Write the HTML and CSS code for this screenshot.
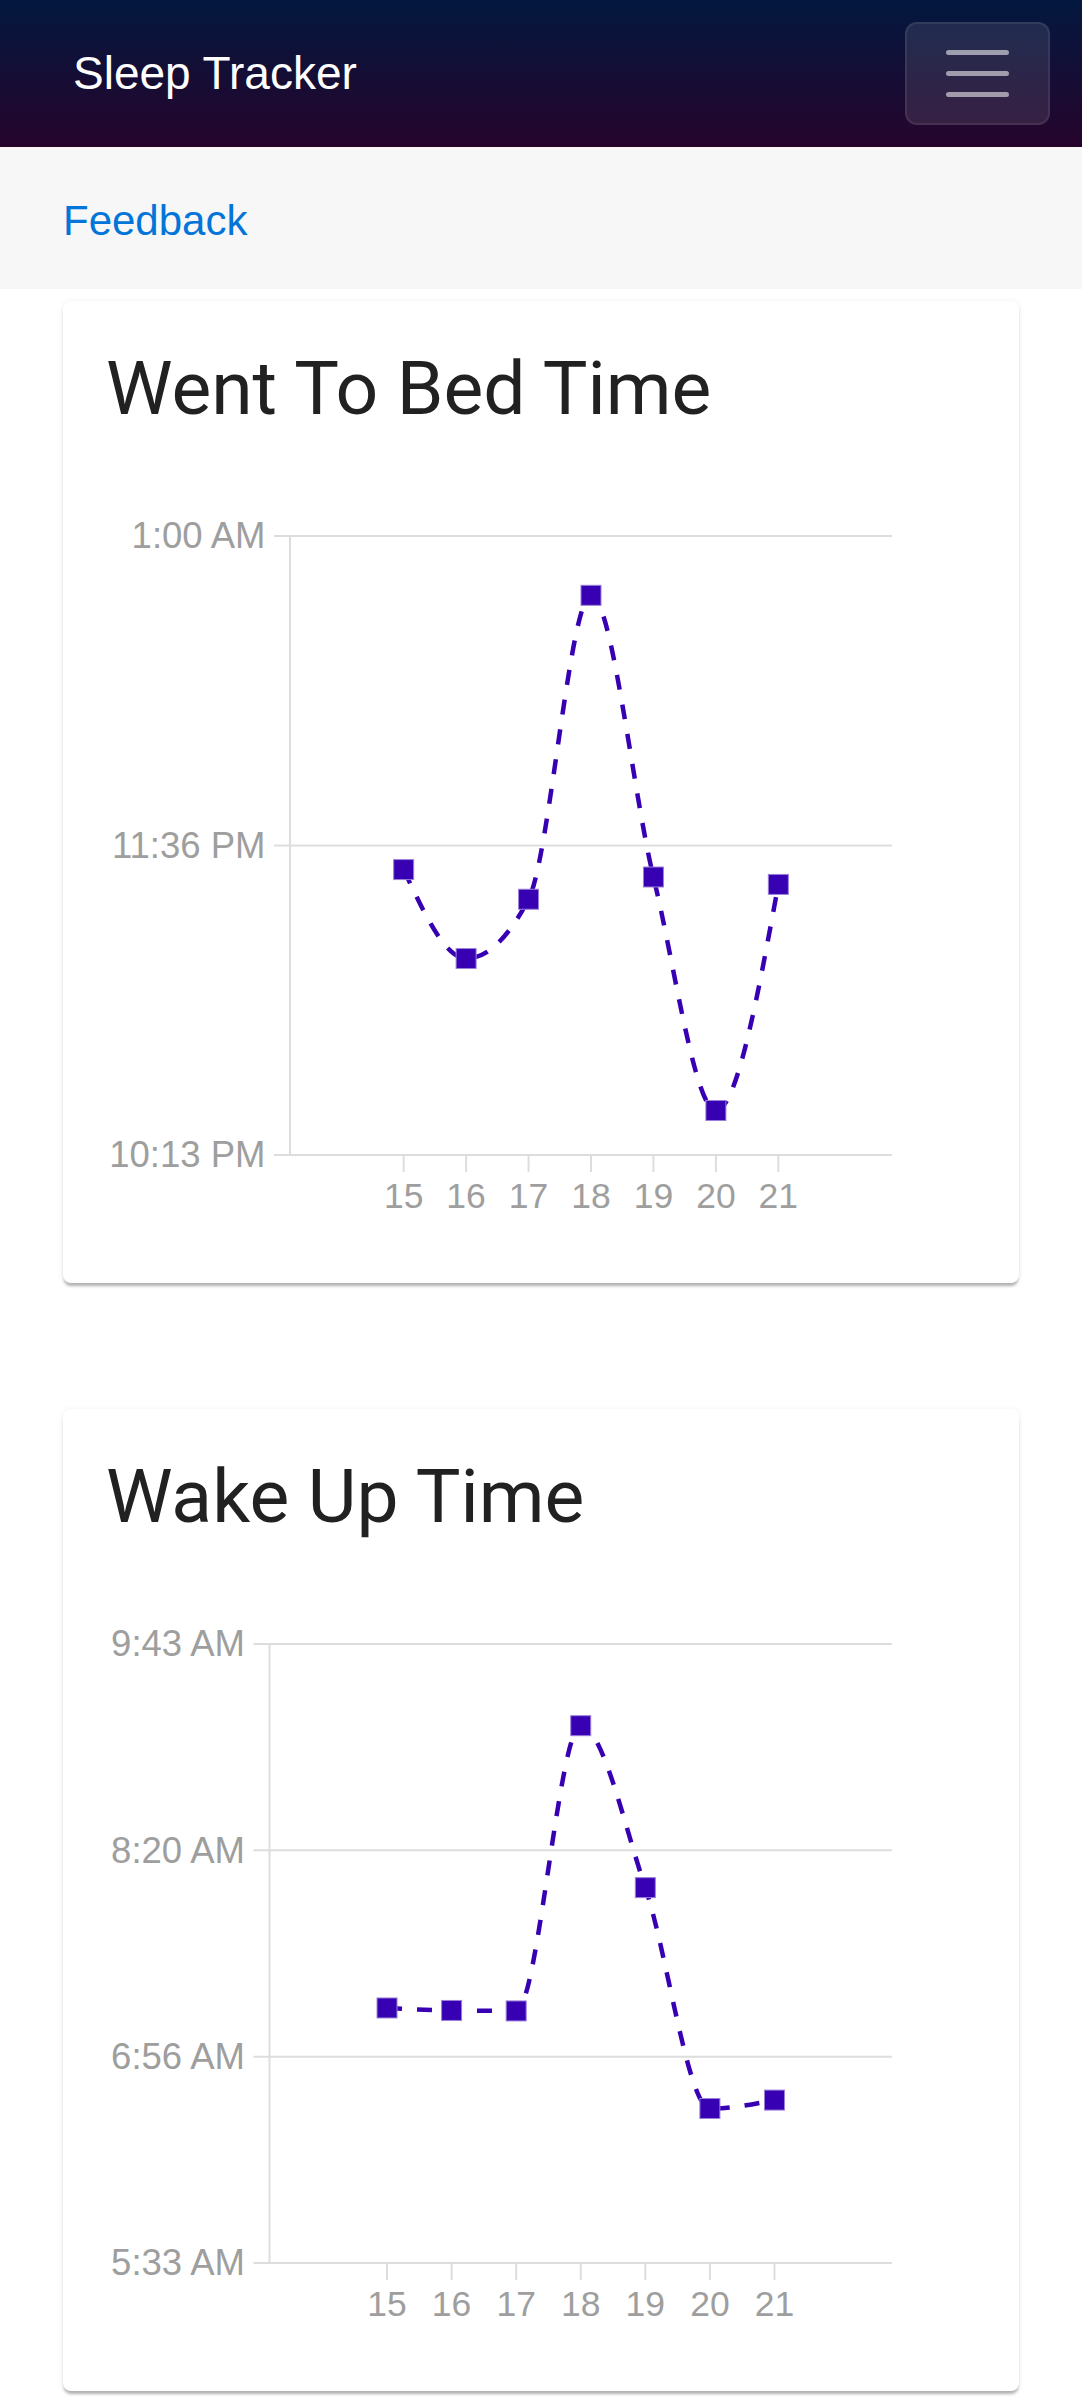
FILE: index.html
```html
<!DOCTYPE html>
<html lang="en">
<head>
  <meta charset="UTF-8" />
  <title>Sleep Tracker</title>
  <link rel="stylesheet" href="styles.css">
</head>
<body>
  <nav class="navbar">
    <span class="brand">Sleep Tracker</span>
    <button class="toggler" aria-label="Toggle navigation">
      <svg width="63" height="47" viewBox="0 0 63 47">
        <path d="M2.5 2.5H60.5M2.5 23.5H60.5M2.5 44.5H60.5" stroke="rgba(255,255,255,0.55)" stroke-width="5" stroke-linecap="round" fill="none" />
      </svg>
    </button>
  </nav>

  <div class="subnav">
    <a href="#" class="feedback">Feedback</a>
  </div>

  <main class="content">
    <section class="card">
      <h2 class="card-title">Went To Bed Time</h2>
      <svg class="chart" id="bedChart" width="956" height="800"></svg>
    </section>

    <section class="card">
      <h2 class="card-title">Wake Up Time</h2>
      <svg class="chart" id="wakeChart" width="956" height="800"></svg>
    </section>
  </main>

  <script>
    const NS = "http://www.w3.org/2000/svg";
    const days = [15, 16, 17, 18, 19, 20, 21];

    // plot box shared by both charts (svg px)
    const plotTop = 104;
    const plotBottom = 723;
    const plotRight = 829;

    // times are minutes from midnight (past midnight runs over 1440)
    const charts = [
      {
        id: "bedChart",
        left: 227,
        min: 1333,
        max: 1500,
        ticks: ["10:13 PM", "11:36 PM", "1:00 AM"],
        values: [1410, 1386, 1402, 1484, 1408, 1345, 1406]
      },
      {
        id: "wakeChart",
        left: 206.5,
        min: 333,
        max: 583,
        ticks: ["5:33 AM", "6:56 AM", "8:20 AM", "9:43 AM"],
        values: [436, 435, 434.8, 550, 484.6, 395.4, 398.8]
      }
    ];

    function el(name, attrs, parent) {
      const node = document.createElementNS(NS, name);
      for (const k in attrs) node.setAttribute(k, attrs[k]);
      parent.appendChild(node);
      return node;
    }

    // monotone cubic through the points, same idea as d3's curveMonotoneX
    function monotonePath(pts) {
      const n = pts.length;
      const m = new Array(n).fill(0);
      const sign = v => (v < 0 ? -1 : 1);
      for (let i = 1; i < n - 1; i++) {
        const [x0, y0] = pts[i - 1], [x1, y1] = pts[i], [x2, y2] = pts[i + 1];
        const h0 = x1 - x0, h1 = x2 - x1;
        const s0 = (y1 - y0) / h0, s1 = (y2 - y1) / h1;
        const p = (s0 * h1 + s1 * h0) / (h0 + h1);
        m[i] = (sign(s0) + sign(s1)) * Math.min(Math.abs(s0), Math.abs(s1), 0.5 * Math.abs(p)) || 0;
      }
      const h = pts[1][0] - pts[0][0];
      m[0] = (3 * (pts[1][1] - pts[0][1]) / h - m[1]) / 2;
      const hl = pts[n - 1][0] - pts[n - 2][0];
      m[n - 1] = (3 * (pts[n - 1][1] - pts[n - 2][1]) / hl - m[n - 2]) / 2;

      let d = `M${pts[0][0]},${pts[0][1]}`;
      for (let i = 1; i < n; i++) {
        const [x0, y0] = pts[i - 1], [x1, y1] = pts[i];
        const dx = (x1 - x0) / 3;
        d += `C${x0 + dx},${y0 + dx * m[i - 1]} ${x1 - dx},${y1 - dx * m[i]} ${x1},${y1}`;
      }
      return d;
    }

    charts.forEach(c => {
      const svg = document.getElementById(c.id);
      const width = plotRight - c.left;
      const step = width / (days.length - 1 + 3.64);
      const firstX = c.left + step * 1.82;
      const xOf = i => firstX + i * step;
      const yOf = v => plotBottom - (v - c.min) / (c.max - c.min) * (plotBottom - plotTop);

      // horizontal grid + y ticks
      c.ticks.forEach((label, i) => {
        const y = plotBottom - i * (plotBottom - plotTop) / (c.ticks.length - 1);
        el("line", { x1: c.left - 16, x2: plotRight, y1: y, y2: y, class: "grid" }, svg);
        const t = el("text", { x: c.left - 24.5, y: y, dy: "0.34em", "text-anchor": "end", class: "tick tick-y" }, svg);
        t.textContent = label;
      });

      el("line", { x1: c.left, x2: c.left, y1: plotTop - 1, y2: plotBottom, class: "grid" }, svg);

      // x ticks
      days.forEach((day, i) => {
        const x = xOf(i);
        el("line", { x1: x, x2: x, y1: plotBottom, y2: plotBottom + 17, class: "grid" }, svg);
        const t = el("text", { x: x, y: plotBottom + 53, "text-anchor": "middle", class: "tick" }, svg);
        t.textContent = day;
      });

      const pts = c.values.map((v, i) => [xOf(i), yOf(v)]);
      el("path", { d: monotonePath(pts), class: "line" }, svg);

      pts.forEach(([x, y]) => {
        el("rect", { x: x - 10, y: y - 10, width: 20, height: 20, class: "dot" }, svg);
      });
    });
  </script>
</body>
</html>
```

FILE: styles.css
```css
body {
  margin: 0;
  background: #fff;
  font-family: 'Liberation Sans', Arial, sans-serif;
}

.navbar {
  height: 147px;
  box-sizing: border-box;
  padding: 0 32px 0 73px;
  display: flex;
  align-items: center;
  justify-content: space-between;
  background: linear-gradient(to bottom, #03183f, #26042c);
}

.brand {
  color: #fff;
  font-size: 46px;
  line-height: 1;
  padding-bottom: 2px;
}

.toggler {
  width: 145px;
  height: 103px;
  display: flex;
  align-items: center;
  justify-content: center;
  padding: 0;
  background: rgba(255, 255, 255, 0.1);
  border: 2px solid rgba(255, 255, 255, 0.08);
  border-radius: 12px;
  cursor: pointer;
}

.toggler svg {
  display: block;
}

.subnav {
  background: #f7f7f7;
  padding: 50px 63px 45px;
  font-size: 42px;
  line-height: 47px;
}

.feedback {
  color: #0275d8;
  text-decoration: none;
}

.content {
  padding: 12px 63px 40px;
}

.card {
  background: #fff;
  border-radius: 8px;
  padding-bottom: 51px;
  box-shadow: 0 4px 3px -1px rgba(0, 0, 0, 0.28), 0 1px 6px rgba(0, 0, 0, 0.08);
}

.card + .card {
  margin-top: 126px;
}

.card-title {
  margin: 0;
  padding: 43px 43px 0;
  font-family: Roboto, 'Noto Sans', sans-serif;
  font-size: 75px;
  font-weight: 400;
  line-height: 88px;
  color: #212121;
}

.chart {
  display: block;
}

.chart .grid {
  stroke: #ddd;
  stroke-width: 2;
}

.chart .tick {
  fill: #9e9e9e;
  font-family: 'Liberation Sans', Arial, sans-serif;
  font-size: 35.5px;
}

.chart .tick-y {
  font-size: 36.5px;
}

.chart .line {
  fill: none;
  stroke: #3700b3;
  stroke-width: 4.5;
  stroke-dasharray: 15 15;
}

.chart .dot {
  fill: #3700b3;
  stroke: #9b80d9;
  stroke-width: 1;
}
```
